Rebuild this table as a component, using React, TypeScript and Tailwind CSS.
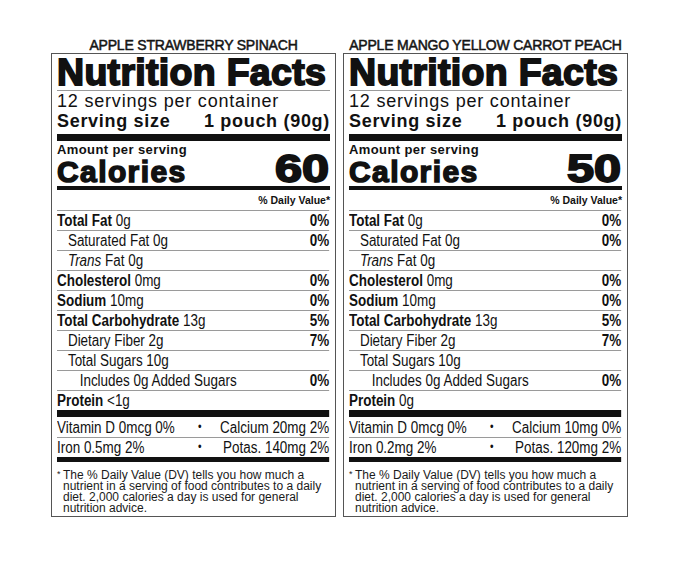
type Row = { label: string; amount: string; bold?: boolean; italic?: boolean; indent?: 0 | 1 | 2; dv?: string };

type Label = {
  name: string;
  calories: string;
  rows: Row[];
  vitamins: [string, string][];
};

const labels: Label[] = [
  {
    name: "APPLE STRAWBERRY SPINACH",
    calories: "60",
    rows: [
      { label: "Total Fat", amount: "0g", bold: true, dv: "0%" },
      { label: "Saturated Fat", amount: "0g", indent: 1, dv: "0%" },
      { label: "Trans", amount: "Fat 0g", italic: true, indent: 1 },
      { label: "Cholesterol", amount: "0mg", bold: true, dv: "0%" },
      { label: "Sodium", amount: "10mg", bold: true, dv: "0%" },
      { label: "Total Carbohydrate", amount: "13g", bold: true, dv: "5%" },
      { label: "Dietary Fiber", amount: "2g", indent: 1, dv: "7%" },
      { label: "Total Sugars", amount: "10g", indent: 1 },
      { label: "Includes 0g Added Sugars", amount: "", indent: 2, dv: "0%" },
      { label: "Protein", amount: "<1g", bold: true },
    ],
    vitamins: [
      ["Vitamin D 0mcg 0%", "Calcium 20mg 2%"],
      ["Iron 0.5mg 2%", "Potas. 140mg 2%"],
    ],
  },
  {
    name: "APPLE MANGO YELLOW CARROT PEACH",
    calories: "50",
    rows: [
      { label: "Total Fat", amount: "0g", bold: true, dv: "0%" },
      { label: "Saturated Fat", amount: "0g", indent: 1, dv: "0%" },
      { label: "Trans", amount: "Fat 0g", italic: true, indent: 1 },
      { label: "Cholesterol", amount: "0mg", bold: true, dv: "0%" },
      { label: "Sodium", amount: "10mg", bold: true, dv: "0%" },
      { label: "Total Carbohydrate", amount: "13g", bold: true, dv: "5%" },
      { label: "Dietary Fiber", amount: "2g", indent: 1, dv: "7%" },
      { label: "Total Sugars", amount: "10g", indent: 1 },
      { label: "Includes 0g Added Sugars", amount: "", indent: 2, dv: "0%" },
      { label: "Protein", amount: "0g", bold: true },
    ],
    vitamins: [
      ["Vitamin D 0mcg 0%", "Calcium 10mg 0%"],
      ["Iron 0.2mg 2%", "Potas. 120mg 2%"],
    ],
  },
];

// indents are in the unscaled (condensed) coordinate space
const indents = ["pl-0", "pl-[13px]", "pl-[27px]"];

function NutrientRow({ row }: { row: Row }) {
  return (
    <div className="flex h-[20px] items-center justify-between whitespace-nowrap border-t border-[#9a9a9a] leading-[19px]">
      <span className={indents[row.indent ?? 0]}>
        {row.italic ? (
          <>
            <i>{row.label}</i> {row.amount}
          </>
        ) : row.bold ? (
          <>
            <b>{row.label}</b> {row.amount}
          </>
        ) : (
          <>
            {row.label}
            {row.amount ? " " + row.amount : ""}
          </>
        )}
      </span>
      {row.dv && <b>{row.dv}</b>}
    </div>
  );
}

function FactsPanel({ data }: { data: Label }) {
  return (
    <div className="flex w-[285px] flex-col">
      <div className="text-center text-[14px] leading-[15px] tracking-[-0.2px] text-[#151515] [-webkit-text-stroke:0.5px_#151515]">
        {data.name}
      </div>

      <div className="border-[1.5px] border-[#555] px-[5px] pb-[2px] text-[#111]">
        {/* title block */}
        <div className="h-[36px] whitespace-nowrap text-[37.5px] font-bold leading-[36px] tracking-[0.3px] [-webkit-text-stroke:1.8px_#111]">
          Nutrition Facts
        </div>
        <div className="h-px bg-[#9a9a9a]" />
        <div className="h-[20px] text-[18px] leading-[20px] tracking-[0.8px]">12 servings per container</div>
        <div className="flex h-[20px] justify-between text-[18px] font-bold leading-[20px] tracking-[0.7px]">
          <span>Serving size</span>
          <span>1 pouch (90g)</span>
        </div>
        <div className="mt-[3px] h-[7px] bg-[#111]" />

        {/* calories */}
        <div className="h-[18px] text-[13px] font-bold leading-[18px] tracking-[0.4px]">Amount per serving</div>
        <div className="flex h-[27px] items-baseline justify-between">
          <span className="text-[30px] font-bold leading-[23px] tracking-[1.4px] [-webkit-text-stroke:1.5px_#111]">
            Calories
          </span>
          <span className="inline-block origin-right scale-x-[1.28] pr-[1px] text-[38px] font-bold leading-[20px] [-webkit-text-stroke:1.8px_#111]">
            {data.calories}
          </span>
        </div>
        <div className="h-[4px] bg-[#111]" />
        <div className="h-[20px] text-right text-[10.5px] font-bold leading-[20px]">% Daily Value*</div>

        {/* nutrients, set in a condensed face */}
        <div className="w-[272px] overflow-visible">
          <div className="w-[324px] origin-left scale-x-[0.84] text-[16px]">
            {data.rows.map((r) => (
              <NutrientRow key={r.label + r.amount} row={r} />
            ))}
            <div className="h-[7px] bg-[#111]" />
            {data.vitamins.map(([l, r], i) => (
              <div
                key={l}
                className={
                  "grid h-[20px] grid-cols-[165px_10px_1fr] items-center whitespace-nowrap leading-[19px] " +
                  (i > 0 ? "border-t border-[#9a9a9a]" : "")
                }
              >
                <span>{l}</span>
                <span className="text-center text-[12px]">•</span>
                <span className="text-right">{r}</span>
              </div>
            ))}
            <div className="h-[5px] bg-[#111]" />
          </div>
        </div>

        {/* footnote */}
        <div className="flex pt-[8px] text-[12px] leading-[11px] text-[#1a1a1a]">
          <span className="w-[6px] shrink-0 text-[9px] leading-[9px]">*</span>
          <span className="whitespace-nowrap">
            The % Daily Value (DV) tells you how much a
            <br />
            nutrient in a serving of food contributes to a daily
            <br />
            diet. 2,000 calories a day is used for general
            <br />
            nutrition advice.
          </span>
        </div>
      </div>
    </div>
  );
}

export default function App() {
  return (
    <div className="flex h-[562px] w-[679px] justify-center gap-[7px] bg-white pt-[38px] font-['Liberation_Sans',Arial,sans-serif]">
      {labels.map((l) => (
        <FactsPanel key={l.name} data={l} />
      ))}
    </div>
  );
}
